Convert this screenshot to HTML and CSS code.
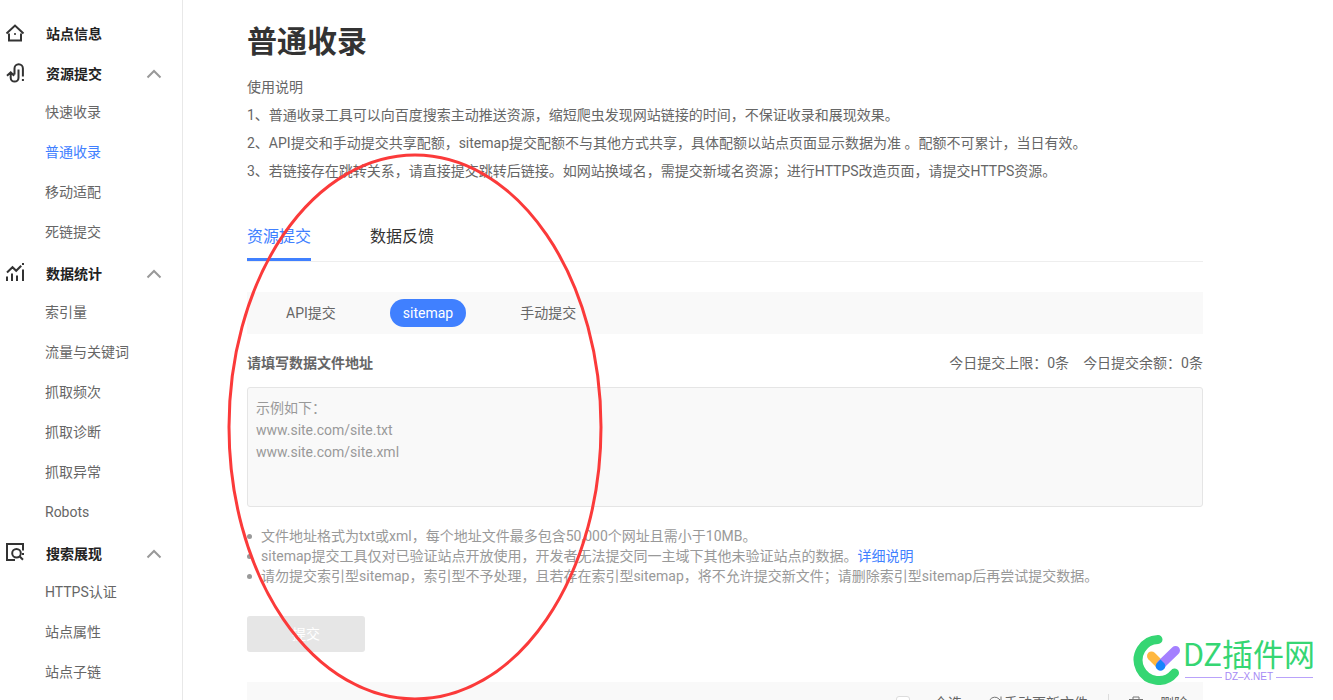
FILE: index.html
```html
<!DOCTYPE html>
<html lang="zh-CN">
<head>
<meta charset="utf-8">
<title>普通收录</title>
<link rel="stylesheet" href="styles.css">
</head>
<body>
<div class="page">
  <nav class="sidebar" aria-label="主导航">
    <a class="group" href="#">
      <svg class="group-icon" viewBox="0 0 20 20"><path d="M1.500 10.500 10 2.500l8.500 8M4 10.500v7h12v-7"/><path d="M9.200 11h1.600"/></svg>
      <span>站点信息</span>
    </a>
    <button class="group" type="button" aria-expanded="true">
      <svg class="group-icon" viewBox="0 0 20 20"><path d="M13.500 13V6.500M9.500 11.500V5.500a4.200 4.200 0 0 1 8.400 0v8M13.500 12.500v2.200a3.900 3.900 0 0 1-7.800 0V10M2 12.800l3.700-3.500 3.500 3.500M17.900 16v2"/></svg>
      <span>资源提交</span>
      <svg class="chevron" viewBox="0 0 16 10"><path d="M1.500 8.500 8 2l6.500 6.500"/></svg>
    </button>
    <a class="item" href="#">快速收录</a>
    <a class="item item-active" href="#">普通收录</a>
    <a class="item" href="#">移动适配</a>
    <a class="item" href="#">死链提交</a>
    <button class="group" type="button" aria-expanded="true">
      <svg class="group-icon" viewBox="0 0 20 20"><path d="M2 18v-4.500M7 18v-7.500M12 18v-5.500M18 18V6.500M18 0v2M2 9.500l5.500-5.300 3.700 3.600 5-5"/></svg>
      <span>数据统计</span>
      <svg class="chevron" viewBox="0 0 16 10"><path d="M1.500 8.500 8 2l6.500 6.500"/></svg>
    </button>
    <a class="item" href="#">索引量</a>
    <a class="item" href="#">流量与关键词</a>
    <a class="item" href="#">抓取频次</a>
    <a class="item" href="#">抓取诊断</a>
    <a class="item" href="#">抓取异常</a>
    <a class="item" href="#">Robots</a>
    <button class="group" type="button" aria-expanded="true">
      <svg class="group-icon" viewBox="0 0 20 20"><path d="M18 7.500V1H2v16h8"/><circle cx="11.500" cy="10.200" r="4.300"/><path d="m14.500 13.300 3.500 3.500M18 10v2"/></svg>
      <span>搜索展现</span>
      <svg class="chevron" viewBox="0 0 16 10"><path d="M1.500 8.500 8 2l6.500 6.500"/></svg>
    </button>
    <a class="item" href="#">HTTPS认证</a>
    <a class="item" href="#">站点属性</a>
    <a class="item" href="#">站点子链</a>
  </nav>

  <main class="main">
    <h1 class="title">普通收录</h1>
    <section class="intro">
      <p>使用说明</p>
      <p>1、普通收录工具可以向百度搜索主动推送资源，缩短爬虫发现网站链接的时间，不保证收录和展现效果。</p>
      <p>2、API提交和手动提交共享配额，sitemap提交配额不与其他方式共享，具体配额以站点页面显示数据为准 。配额不可累计，当日有效。</p>
      <p>3、若链接存在跳转关系，请直接提交跳转后链接。如网站换域名，需提交新域名资源；进行HTTPS改造页面，请提交HTTPS资源。</p>
    </section>

    <div class="tabs" role="tablist">
      <button class="tab tab-active" type="button" role="tab" aria-selected="true">资源提交</button>
      <button class="tab" type="button" role="tab" aria-selected="false">数据反馈</button>
    </div>

    <div class="modes">
      <button class="mode" type="button">API提交</button>
      <button class="mode mode-active" type="button">sitemap</button>
      <button class="mode" type="button">手动提交</button>
    </div>

    <form class="form">
      <div class="form-head">
        <label class="form-label" for="urls">请填写数据文件地址</label>
        <div class="quota"><span>今日提交上限：0条</span><span>今日提交余额：0条</span></div>
      </div>
      <textarea class="urls" id="urls" placeholder="示例如下：&#10;www.site.com/site.txt&#10;www.site.com/site.xml"></textarea>
      <ul class="notes">
        <li class="note">文件地址格式为txt或xml，每个地址文件最多包含50,000个网址且需小于10MB。</li>
        <li class="note">sitemap提交工具仅对已验证站点开放使用，开发者无法提交同一主域下其他未验证站点的数据。<a class="link" href="#">详细说明</a></li>
        <li class="note">请勿提交索引型sitemap，索引型不予处理，且若存在索引型sitemap，将不允许提交新文件；请删除索引型sitemap后再尝试提交数据。</li>
      </ul>
      <button class="submit" type="button" disabled>提交</button>
    </form>

    <div class="toolbar">
      <label class="select-all"><input class="check" type="checkbox"><span>全选</span></label>
      <button class="tool" type="button">
        <svg class="refresh-icon" viewBox="0 0 14 14"><path d="M12.500 8A5.800 5.800 0 1 1 11 3l1.500 1.500M13 .5v4.200H8.800"/></svg>
        <span>手动更新文件</span>
      </button>
      <span class="divider"></span>
      <button class="tool tool-delete" type="button">
        <svg class="trash-icon" viewBox="0 0 14 14"><path d="M0 3.500h14M4 3.500V1h6v2.500M2 3.500V13h10V3.500M5.500 6v4M8.500 6v4"/></svg>
        <span>删除</span>
      </button>
    </div>
  </main>

  <svg class="marker" viewBox="0 0 376 548" aria-hidden="true"><ellipse cx="188" cy="274" rx="186" ry="272"/></svg>

  <div class="brand">
    <svg class="brand-logo" viewBox="0 0 48 50">
      <path class="brand-ring" d="M25 4.500A20.500 20.500 0 1 0 41.500 38"/>
      <path class="brand-orange" d="m18.500 21 8.500 8.500"/>
      <path class="brand-purple" d="M28 29.500 42.500 15.500"/>
      <path class="brand-blue" d="M27.500 24.500l4 4a4.700 4.700 0 1 1-8 0z"/>
    </svg>
    <div class="brand-text">
      <div class="brand-name">DZ插件网</div>
      <div class="brand-site">DZ–X.NET</div>
    </div>
  </div>
</div>
</body>
</html>
```
FILE: styles.css
```css
* {
  box-sizing: border-box;
}

body {
  margin: 0;
  background: #fff;
  color: #666;
  font: 14px/20px Roboto, "Noto Sans CJK SC", sans-serif;
}

button,
textarea {
  margin: 0;
  padding: 0;
  border: 0;
  background: none;
  color: inherit;
  font: inherit;
}

a {
  color: inherit;
  text-decoration: none;
}

p,
h1,
ul {
  margin: 0;
}

svg {
  flex: none;
  fill: none;
}

.page {
  position: relative;
  display: flex;
  height: 100vh;
  overflow: hidden;
}

/* Sidebar */
.sidebar {
  flex: none;
  width: 183px;
  padding-top: 12px;
  border-right: 1px solid #e8e8e8;
}

.group {
  display: flex;
  align-items: center;
  width: 100%;
  height: 40px;
  padding: 4px 20px 0 5px;
  color: #222;
  font-weight: 600;
  text-align: left;
}

.group-icon {
  width: 20px;
  height: 20px;
  margin-right: 21px;
  margin-bottom: 2px;
  stroke: #333;
  stroke-width: 2;
}

.chevron {
  width: 16px;
  height: 10px;
  margin-left: auto;
  stroke: #999;
  stroke-width: 2;
}

.item {
  display: block;
  padding-left: 45px;
  line-height: 40px;
}

.item-active {
  color: #4080ff;
}

/* Main column */
.main {
  flex: 1;
  min-width: 0;
  padding: 21px 130px 0 64px;
}

.title {
  margin-bottom: 10px;
  color: #333;
  font-size: 30px;
  line-height: 42px;
}

.intro {
  line-height: 28px;
}

.tabs {
  display: flex;
  gap: 59px;
  margin: 28px 0 30px;
  border-bottom: 1px solid #eee;
}

.tab {
  height: 48px;
  padding-top: 3px;
  border-bottom: 3px solid transparent;
  color: #333;
  font-size: 16px;
  line-height: 24px;
}

.tab-active {
  border-color: #4080ff;
  color: #4080ff;
}

.modes {
  display: flex;
  align-items: center;
  gap: 28px;
  height: 42px;
  padding-left: 26px;
  background: #f9f9f9;
}

.mode {
  height: 28px;
  padding: 0 13px;
  border-radius: 14px;
}

.mode-active {
  background: #4080ff;
  color: #fff;
}

.mode + .mode {
  margin-left: 13px;
}

.form-head {
  display: flex;
  justify-content: space-between;
  padding: 19px 0 14px;
}

.form-label {
  font-weight: 600;
}

.quota {
  display: flex;
  gap: 14px;
}

.urls {
  display: block;
  width: 100%;
  height: 120px;
  padding: 9px 8px;
  border: 1px solid #e5e5e5;
  border-radius: 3px;
  background: #f9f9f9;
  line-height: 22px;
  resize: none;
}

.urls::placeholder {
  color: #999;
  opacity: 1;
}

.notes {
  margin: 19px 0 30px;
  padding: 0;
  color: #999;
  list-style: none;
}

.note::before {
  display: inline-block;
  width: 5px;
  height: 5px;
  margin-right: 9px;
  border-radius: 50%;
  background: #999;
  vertical-align: 2px;
  content: "";
}

.link {
  color: #4080ff;
}

.submit {
  display: block;
  width: 118px;
  height: 36px;
  border-radius: 3px;
  background: #e6e6e6;
  color: #fff;
}

.toolbar {
  display: flex;
  align-items: center;
  justify-content: flex-end;
  gap: 20px;
  height: 42px;
  margin-top: 30px;
  padding-right: 15px;
  background: #f9f9f9;
}

.select-all {
  display: flex;
  align-items: center;
  gap: 24px;
  margin-right: 6px;
}

.check {
  appearance: none;
  width: 14px;
  height: 14px;
  margin: 0;
  border: 1px solid #ddd;
  border-radius: 3px;
  background: #fff;
}

.tool {
  display: flex;
  align-items: center;
  gap: 2px;
}

.tool-delete {
  gap: 17px;
}

.refresh-icon,
.trash-icon {
  width: 14px;
  height: 14px;
  stroke: #777;
}

.divider {
  width: 1px;
  height: 18px;
  background: #ddd;
}

/* Overlays */
.marker {
  position: absolute;
  top: 153px;
  left: 227px;
  width: 376px;
  height: 548px;
  stroke: #fb3a3a;
  stroke-width: 3;
  pointer-events: none;
}

.brand {
  position: absolute;
  right: 18px;
  bottom: 15px;
  display: flex;
  gap: 2px;
}

.brand-logo {
  width: 48px;
  height: 50px;
  stroke-linecap: round;
}

.brand-ring {
  stroke: #35d673;
  stroke-width: 9;
}

.brand-orange {
  stroke: #ffb840;
  stroke-width: 9;
}

.brand-purple {
  stroke: #a480ff;
  stroke-width: 9;
}

.brand-blue {
  fill: #1684fc;
}

.brand-name {
  color: #35d673;
  font-family: "Noto Sans CJK SC", sans-serif;
  font-size: 31px;
  line-height: 36px;
}

.brand-site {
  display: flex;
  align-items: center;
  gap: 3px;
  margin: 0 2px;
  color: #a68af5;
  font-family: "Liberation Sans", sans-serif;
  font-size: 10px;
  line-height: 12px;
}

.brand-site::before,
.brand-site::after {
  flex: 1;
  height: 1px;
  background: #b9a2fa;
  content: "";
}
```
